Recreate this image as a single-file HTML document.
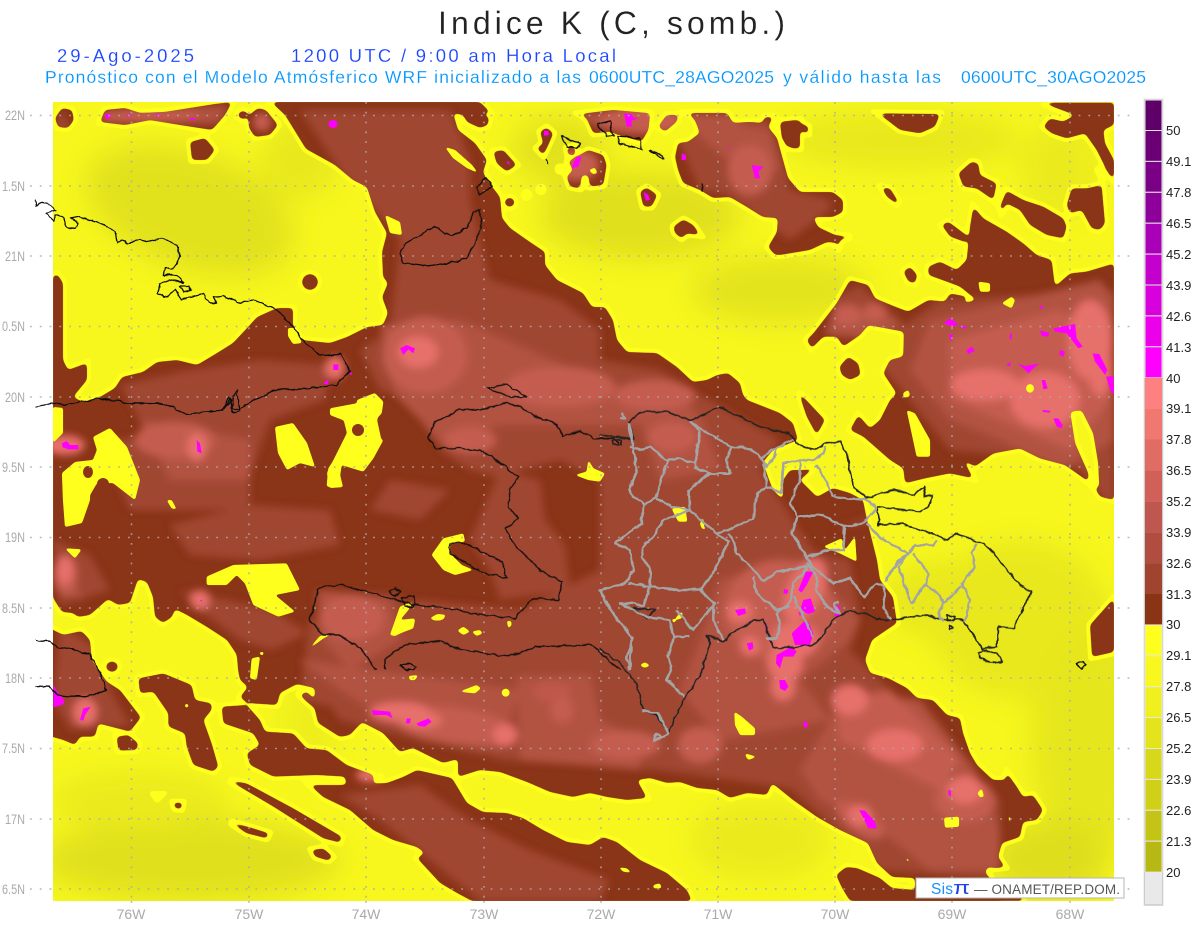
<!DOCTYPE html>
<html><head><meta charset="utf-8"><title>Indice K</title>
<style>
html,body{margin:0;padding:0;background:#fff;width:1200px;height:927px;overflow:hidden}
svg{display:block}
text{font-family:"Liberation Sans",sans-serif;white-space:pre}
.k path{vector-effect:non-scaling-stroke}
.lat{fill:#aaa;font-size:14px}
.lon{fill:#aaa;font-size:14px;text-anchor:middle}
.cb{fill:#222;font-size:13px}
.t{stroke:#fff;stroke-width:.15px}
</style></head><body>
<svg width="1200" height="927" viewBox="0 0 1200 927" xmlns="http://www.w3.org/2000/svg">
<defs>
<filter id="f3" filterUnits="userSpaceOnUse" x="0" y="0" width="1200" height="927"><feGaussianBlur stdDeviation="4"/></filter>
<filter id="f12" filterUnits="userSpaceOnUse" x="0" y="0" width="1200" height="927"><feGaussianBlur stdDeviation="14"/></filter>
<filter id="r2" filterUnits="userSpaceOnUse" x="0" y="0" width="1200" height="927" color-interpolation-filters="sRGB"><feGaussianBlur stdDeviation="2"/><feComponentTransfer><feFuncA type="linear" slope="8" intercept="-3.5"/></feComponentTransfer></filter>
<filter id="r1" filterUnits="userSpaceOnUse" x="0" y="0" width="1200" height="927" color-interpolation-filters="sRGB"><feGaussianBlur stdDeviation="1.1"/><feComponentTransfer><feFuncA type="linear" slope="6" intercept="-2.3"/></feComponentTransfer></filter>
<filter id="w" filterUnits="userSpaceOnUse" x="0" y="0" width="1200" height="927"><feTurbulence type="fractalNoise" baseFrequency=".13" numOctaves="2" seed="4" result="n"/><feDisplacementMap in="SourceGraphic" in2="n" scale="4" xChannelSelector="R" yChannelSelector="G"/></filter>
<clipPath id="map"><rect x="53" y="102" width="1061" height="799"/></clipPath>
<g id="b" class="k">
<path d="M271,102 480,102 490,112 482,115 489,117 488,125 480,128 467,122 463,115 453,113 458,130 475,143 487,160 483,172 487,180 500,197 502,218 510,228 530,242 545,252 545,265 557,280 583,293 592,307 605,307 613,320 617,340 627,352 657,353 677,367 693,382 707,380 717,375 728,373 740,383 743,395 747,400 780,413 793,423 798,440 773,450 763,462 768,477 773,490 783,500 783,480 790,470 805,470 815,467 800,480 817,497 833,488 850,493 863,500 867,520 877,560 880,580 893,597 897,623 872,640 865,660 870,673 888,678 907,688 917,698 933,700 947,715 960,718 963,733 970,753 977,765 993,780 1005,780 1007,773 1017,787 1023,797 1033,795 1043,810 1037,820 1023,822 1020,837 1002,843 998,857 1005,867 997,868 987,867 985,873 990,878 915,878 892,877 877,863 868,843 840,830 817,817 793,800 772,783 767,795 747,793 730,798 717,790 697,788 680,782 667,783 650,778 637,780 647,798 627,800 607,797 590,793 573,797 550,792 527,782 500,772 480,770 458,777 458,759 443,763 413,748 400,752 383,733 362,722 350,735 340,737 318,723 315,710 315,688 297,684 280,693 277,705 247,703 240,697 248,687 240,680 238,670 237,655 227,640 207,627 187,615 175,609 172,617 163,623 155,617 153,597 147,582 138,579 130,603 118,605 108,599 90,615 78,617 73,613 62,612 53,598 53,275 58,275 63,283 63,360 68,370 87,363 87,380 73,397 83,402 100,397 115,388 122,377 143,372 157,362 177,360 197,365 217,353 233,343 248,327 257,317 277,308 293,308 293,327 302,340 320,342 330,343 347,337 367,327 383,325 388,313 382,297 388,283 383,277 382,252 387,233 375,212 367,187 353,180 335,165 306,149 285,115z"/>
<path d="M310,785 340,785 387,783 403,777 417,770 452,778 467,803 483,812 507,813 523,818 543,830 567,842 590,845 603,837 617,842 640,860 667,873 687,890 692,901 472,901 457,893 440,883 417,858 425,853 417,847 393,840 373,830 350,810 323,797z"/>
<path d="M688,113 727,113 733,123 750,122 762,123 765,117 773,117 768,127 777,138 788,178 800,192 833,192 843,200 843,212 833,217 813,217 818,227 835,235 852,237 840,240 838,252 837,243 827,242 810,250 780,255 775,255 768,247 777,232 778,218 763,217 747,207 730,197 713,198 700,190 683,183 678,170 675,157 678,143 688,142 700,133 695,120z"/>
<path d="M1090,625 1114,598 1114,652 1092,657z"/>
<path d="M100,122 105,110 125,108 140,113 165,112 190,108 215,104 232,102 225,115 212,130 180,125 150,120 125,125z M55,118 62,108 72,110 74,120 68,128 58,127z M248,116 258,108 266,110 278,125 270,135 255,137 249,128z M238,115a5,4 0 1,0 10,0a5,4 0 1,0-10,0z M190,142 205,138 215,150 207,160 192,160z"/>
<path d="M302,282a8,8 0 1,0 16,0a8,8 0 1,0-16,0z"/>
<g transform="translate(400,100) scale(.33333)">
<path d="M540,42 640,30 750,40 745,90 725,125 655,105 630,95 580,100 560,55z M775,80 800,45 835,45 830,65 795,95z M1140,65 1200,60 1200,145 1175,145 1145,115 1160,80z M280,155 310,150 350,195 320,215 290,190z M420,95 440,82 460,100 445,135 430,165 410,145 430,130z M505,185 565,150 610,165 620,195 610,255 570,260 565,225 545,225 540,265 510,260 500,230 520,210z M500,145 525,140 525,165 505,165z M820,380 850,358 880,375 900,405 860,400 845,415 825,400z M720,275 740,262 772,285 755,320 730,320z M417,268a6,6 0 1,0 12,0a6,6 0 1,0-12,0z M374,285a6,7 0 1,0 12,0a6,7 0 1,0-12,0z M314,307a15,14 0 1,0 30,0a15,14 0 1,0-30,0z M474,207a4,6 0 1,0 8,0a4,6 0 1,0-8,0z"/>
</g>
<g transform="translate(780,100) scale(.33333)">
<path d="M0,70 40,60 85,80 85,100 50,90 45,140 20,140 5,110z M295,40 480,42 465,80 420,100 360,90z M535,220 575,185 595,190 600,225 650,250 640,300 590,265 550,260z M305,262 330,265 355,305 350,312 320,290z M485,375 505,365 565,410 560,428 510,410z M785,8 885,45 850,65 810,55 790,80 815,100 860,115 915,100 950,150 985,220 1002,240 1002,180 975,130 970,90 1002,75 1002,8z M955,210 970,205 965,230z M660,320 680,272 730,300 790,320 850,355 860,380 850,415 800,405 750,375 720,330 680,310 665,335z M860,315 875,265 920,265 965,255 975,370 960,390 935,385 905,330 870,340z M370,515 390,500 412,525 405,550 385,545z M178,800 205,770 235,790 242,825 210,840 185,825z M55,875 135,960 110,1005 80,950z"/>
<path d="M570,380 580,320 610,355 680,395 730,430 770,465 815,480 825,560 870,520 920,515 970,500 1002,490 1002,1200 960,1190 945,1165 958,1160 955,1090 940,1000 905,930 870,935 885,1030 925,1120 925,1145 855,1095 780,1075 720,1045 640,1060 585,1100 550,1080 580,1135 510,1120 435,1135 375,1150 370,1105 330,1080 250,1010 210,990 235,945 270,985 300,960 330,900 350,880 310,820 330,780 370,770 372,695 265,675 240,705 190,740 170,710 130,710 95,745 80,720 100,700 170,610 210,540 265,555 285,595 345,620 385,635 445,600 495,605 510,580 560,590 550,610 590,600 540,560 500,545 445,525 445,500 480,485 530,510 560,480z"/>
</g>
<g transform="translate(40,500) scale(.33333)">
<path d="M0,370 70,405 125,393 150,420 155,480 200,545 240,570 303,652 270,695 175,670 165,710 120,710 105,735 70,720 0,700z M230,710 265,705 295,730 290,750 235,752z M295,535 370,520 455,555 465,600 515,610 515,630 490,660 515,730 535,800 520,815 460,795 440,740 435,700 385,680 385,640 340,575 300,580z M198,500a18,16 0 1,0 36,0a18,16 0 1,0-36,0z M345,885 362,885 352,895z M400,908 428,908 424,927 405,925z M568,965 640,985 687,1000 680,1015 620,1000z M565,840 620,850 760,925 905,1010 900,1028 850,1015 700,920z M815,1050 850,1045 878,1070 865,1082 825,1070z M545,620 620,615 660,660 675,695 760,700 800,745 860,750 920,795 1000,825 1000,860 920,855 915,830 830,825 700,830 630,795 620,760 660,735 640,700 550,670z M780,585 800,575 825,600 830,630 800,605z M590,465 625,460 625,500 620,540 600,540z"/>
</g>
<path d="M836,875 846,867 857,868 880,878 892,888 915,890 915,901 850,901 842,888z M915,878 990,878 1000,897 1023,897 1023,901 915,901z"/>
</g>
<mask id="bm" maskUnits="userSpaceOnUse" x="0" y="0" width="1200" height="927"><use href="#b" fill="#fff" filter="url(#r2)"/></mask>
</defs>

<rect width="1200" height="927" fill="#fff"/>
<g clip-path="url(#map)">
<rect x="53" y="102" width="1061" height="799" fill="#f7f71e"/>
<g filter="url(#f12)">
<ellipse cx="190" cy="210" rx="110" ry="60" fill="#e2e21c" transform="rotate(20 190 210)"/>
<ellipse cx="300" cy="160" rx="40" ry="40" fill="#e8e81c"/>
<ellipse cx="640" cy="215" rx="100" ry="45" fill="#e0e01c"/>
<ellipse cx="560" cy="150" rx="50" ry="35" fill="#e2e21c"/>
<ellipse cx="780" cy="290" rx="90" ry="35" fill="#e4e41c"/>
<ellipse cx="900" cy="140" rx="120" ry="30" fill="#e8e81c"/>
<ellipse cx="1060" cy="170" rx="40" ry="50" fill="#eaea1c"/>
<ellipse cx="190" cy="860" rx="150" ry="42" fill="#e0e01c"/>
<ellipse cx="140" cy="800" rx="90" ry="30" fill="#eaea1c"/>
<ellipse cx="310" cy="720" rx="30" ry="60" fill="#eeee1c"/>
<ellipse cx="760" cy="840" rx="70" ry="40" fill="#eaea1c"/>
<ellipse cx="1020" cy="620" rx="90" ry="80" fill="#e8e81c"/>
<ellipse cx="1090" cy="740" rx="60" ry="120" fill="#e6e61c"/>
<ellipse cx="1050" cy="860" rx="60" ry="40" fill="#dede1c"/>
<ellipse cx="950" cy="600" rx="70" ry="40" fill="#e8e81c"/>
</g>
<use href="#b" fill="#ffff1e" stroke="#ffff1e" stroke-width="8" filter="url(#r2)"/>
<use href="#b" fill="#8a3418" filter="url(#r2)"/>
<g mask="url(#bm)">
<g filter="url(#f3)">
<g fill="#a04630">
<path d="M300,110 450,110 470,160 470,200 490,280 560,300 600,330 600,360 660,370 700,395 780,440 760,470 760,540 850,560 860,620 850,650 900,700 950,750 980,800 1000,880 880,870 800,790 660,770 500,760 400,720 300,700 310,620 420,600 520,610 600,570 600,480 500,430 480,420 380,390 360,350 390,330 400,240 340,170z"/>
<path d="M120,385 180,372 260,360 330,365 325,400 270,420 245,490 200,510 150,470 140,420z"/>
<path d="M53,540 90,555 110,590 60,605z M180,590 273,610 307,633 273,650 240,640 200,610z M315,590 400,595 410,650 360,690 320,660z M300,660 420,650 620,670 640,760 480,755 340,720z M340,795 420,785 470,820 530,850 610,880 600,901 480,901 430,860 380,820z M60,625 100,650 110,690 130,725 70,730 53,700z"/>
<path d="M440,410 540,420 600,440 580,455 560,460 520,470 510,480 470,470 440,450z M500,470 540,480 545,520 565,545 570,590 500,600 490,570 470,540z M390,480 450,490 420,520 370,510z"/>
<path d="M940,300 1114,290 1114,510 1080,470 1000,455 950,450 910,400 850,330 830,300 860,285 905,325z M700,125 770,130 790,190 830,200 830,210 790,240 720,190 690,170z M830,530 880,520 930,520 920,500z"/>
<path d="M620,480 760,470 820,560 850,660 1000,800 1000,870 880,870 770,770 640,720 620,660z"/>
<path d="M100,110 230,104 225,125 180,125 100,125z M560,110 650,110 750,113 745,140 680,135 600,130z M60,108 72,130 55,130z M170,525 250,505 330,510 340,545 260,560 190,555z"/>
<path d="M100,440 250,430 250,510 130,510z"/>
<path d="M670,120 690,110 770,120 790,180 760,200 700,190z M480,120 460,140 470,180 440,150z"/>
</g>
<g fill="#b25242">
<path d="M380,325 460,320 530,350 610,385 690,405 700,420 620,425 500,425 440,445 420,420 395,395z"/>
<path d="M720,580 800,560 860,620 850,640 800,680 830,720 720,740 680,690 700,640z"/>
<path d="M517,677 590,675 600,720 640,740 640,770 520,760z"/>
<path d="M840,690 920,700 975,770 1000,830 1000,870 930,870 880,830 820,800 800,770 830,720z"/>
<path d="M930,320 1100,280 1114,300 1114,440 1060,470 1000,440 950,420 910,370z"/>
<path d="M300,660 520,690 500,750 420,740 340,690z M640,420 700,415 720,470 660,480z"/>
<path d="M320,590 390,600 400,640 350,670 322,640z M140,420 250,440 250,480 170,480z"/>
<path d="M105,112 225,108 215,122 105,122z M570,115 740,115 740,135 600,125z M835,305 900,320 880,340 825,335z M55,590 85,600 65,570z"/>
<path d="M680,120 700,118 770,130 780,170 740,170z"/>
</g>
<g fill="#c45d50">
<ellipse cx="425" cy="355" rx="42" ry="38"/><ellipse cx="560" cy="387" rx="55" ry="20"/><ellipse cx="655" cy="395" rx="40" ry="15"/>
<ellipse cx="470" cy="440" rx="26" ry="13"/><ellipse cx="672" cy="437" rx="24" ry="15"/>
<ellipse cx="352" cy="618" rx="32" ry="22"/><ellipse cx="455" cy="725" rx="60" ry="17" transform="rotate(8 455 725)"/>
<ellipse cx="552" cy="692" rx="18" ry="10" opacity=".7"/><ellipse cx="562" cy="710" rx="11" ry="13"/><ellipse cx="625" cy="745" rx="35" ry="14"/>
<ellipse cx="780" cy="610" rx="55" ry="50"/><ellipse cx="700" cy="745" rx="22" ry="18"/>
<path d="M835,700 890,690 930,730 960,760 940,790 880,760 840,740z"/>
<path d="M950,340 1060,310 1110,350 1110,400 1070,450 1000,420 950,400z"/>
<ellipse cx="175" cy="440" rx="40" ry="18"/><ellipse cx="262" cy="122" rx="9" ry="9"/>
<ellipse cx="640" cy="120" rx="40" ry="14"/><ellipse cx="750" cy="170" rx="22" ry="25"/><ellipse cx="577" cy="165" rx="22" ry="16"/>
<ellipse cx="965" cy="800" rx="30" ry="22"/><ellipse cx="860" cy="820" rx="28" ry="12" transform="rotate(35 860 820)"/>
<ellipse cx="150" cy="115" rx="50" ry="6"/><ellipse cx="65" cy="575" rx="12" ry="20"/>
<ellipse cx="848" cy="315" rx="14" ry="11"/><ellipse cx="875" cy="312" rx="12" ry="9"/>
</g>
<g fill="#e6706a">
<ellipse cx="418" cy="352" rx="20" ry="16"/><ellipse cx="895" cy="745" rx="28" ry="16"/><ellipse cx="850" cy="700" rx="18" ry="15"/>
<ellipse cx="1045" cy="400" rx="35" ry="28"/><ellipse cx="1090" cy="340" rx="22" ry="40"/><ellipse cx="985" cy="385" rx="34" ry="16"/>
<ellipse cx="965" cy="790" rx="18" ry="14"/><ellipse cx="805" cy="590" rx="18" ry="34" transform="rotate(25 805 590)"/>
<ellipse cx="795" cy="640" rx="24" ry="18"/><ellipse cx="740" cy="612" rx="13" ry="11"/><ellipse cx="785" cy="662" rx="18" ry="20"/>
<ellipse cx="750" cy="646" rx="10" ry="10"/><ellipse cx="783" cy="687" rx="12" ry="14"/><ellipse cx="400" cy="712" rx="30" ry="10"/>
<ellipse cx="505" cy="735" rx="12" ry="11"/><ellipse cx="200" cy="600" rx="10" ry="10"/><ellipse cx="65" cy="445" rx="20" ry="10"/>
<ellipse cx="197" cy="447" rx="10" ry="14"/><ellipse cx="85" cy="712" rx="12" ry="14"/><ellipse cx="335" cy="368" rx="10" ry="12"/>
<ellipse cx="860" cy="815" rx="12" ry="10"/><ellipse cx="65" cy="570" rx="8" ry="14"/><ellipse cx="1100" cy="370" rx="12" ry="26"/>
<ellipse cx="420" cy="720" rx="22" ry="9"/><ellipse cx="370" cy="775" rx="14" ry="7"/>
</g>
</g>
</g>
<g fill="#ffff1e" filter="url(#r1)">
<path d="M93,437 110,428 127,447 140,480 135,500 113,483 97,483 90,495 90,500 82,523 65,527 63,500 62,473 75,462 93,460 97,450z"/>
<path d="M53,407 63,408 63,433 53,443z M385,215 400,222 402,235 390,233z M288,328 295,328 302,343 293,344 288,336z"/>
<path d="M332,410 357,407 357,400 375,393 383,403 377,420 382,443 363,433 358,440 337,463 343,487 330,488 327,473 337,453 347,433 343,417z"/>
<path d="M275,427 293,423 307,443 315,467 300,463 287,470 278,453z"/>
<path d="M445,147 455,150 472,165 478,173 467,168 453,158z"/>
<g transform="translate(40,500) scale(.33333)">
<path d="M500,230 580,195 740,190 780,270 705,285 765,335 715,350 640,315 615,250 590,225 560,255 500,255z M75,145 125,148 105,175z M1175,165 1200,130 1200,195z M805,448 840,408 880,400 850,415z M635,475 660,470 650,540 630,535z M655,458 672,455 668,468z M435,612 445,612 445,622 435,622z M1010,830a12,13 0 1,0 24,0a12,13 0 1,0-24,0z"/>
<path d="M380,0 395,0 410,28 395,25z"/>
</g>
<g transform="translate(280,380) scale(.33333)">
<path d="M150,85 230,70 285,40 310,65 305,100 285,120 285,150 265,165 310,180 280,235 250,275 185,255 175,320 140,320 145,265 175,220 215,130 150,105z M455,525 490,475 550,460 555,485 510,490 510,520 545,555 580,570 525,585 490,570z M885,285 920,275 925,240 940,265 975,280 960,305 925,300z M330,765 360,680 400,665 385,690 360,720 405,715 390,745 345,768z M450,715 470,703 497,705 490,718 465,722z M532,752 550,740 570,755 550,765z M575,755 600,750 608,760 590,768z M683,728 692,720 695,735 685,745z"/>
</g>
<g transform="translate(400,600) scale(.33333)">
<path d="M90,55 115,42 138,45 120,62z M320,60 335,70 325,85z M0,70 45,58 40,85 0,100z M25,228 55,225 45,240 30,240z M178,275 230,255 243,265 225,280z M305,278a12,12 0 1,0 24,0a12,12 0 1,0-24,0z M1003,335 1025,350 1065,385 1065,405 1020,405 1005,375z M1035,460 1068,470 1045,478z M720,195 735,187 750,197 735,203z M655,802 680,805 695,818 670,815z M760,855 780,850 785,865 760,865z M835,40 850,38 840,55z M815,55 830,60 820,70z"/>
</g>
<g transform="translate(600,390) scale(.33333)">
<path d="M215,355 255,350 262,395 235,395 222,370z M300,400 310,380 312,410 320,420 305,415z M345,380 352,378 350,392z M670,470 725,445 735,480 765,440 770,515 720,490z M230,680 247,665 245,685 225,690z M120,825 135,818 148,825 130,832z M910,15 925,0 930,15 912,22z M435,1095 470,1100 445,1110z"/>
</g>
<g transform="translate(780,100) scale(.33333)">
<path d="M380,930 405,940 450,1020 450,1070 410,1070 395,1000z M370,878 385,870 388,890 370,893z M595,545 630,550 630,575 600,575z M665,610 695,590 705,600 695,625z M738,865a12,13 0 1,0 24,0a12,13 0 1,0-24,0z"/>
</g>
<g transform="translate(760,640) scale(.33333)">
<path d="M552,533 597,530 597,560 555,563z M652,460 665,445 672,470 660,472z M745,530 752,530 750,560z M435,650 450,662 442,665z"/>
</g>
<g transform="translate(400,100) scale(.33333)"><path d="M567,210 585,203 592,220 578,222z"/></g>
</g>
<g fill="#8a3418">
<path d="M83,472a5,6 0 1,0 10,0a5,6 0 1,0-10,0z M352,430a6,6 0 1,0 12,0a6,6 0 1,0-12,0z M97,484a6,6 0 1,0 12,0a6,6 0 1,0-12,0z"/>
</g>
<g fill="#ff00ff">
<path d="M105,114 111,114 110,118 106,119z M127,114 132,115 128,117z M156,113 160,115 157,117z M190,118 195,118 195,120 190,120z"/>
<ellipse cx="333" cy="124" rx="4.5" ry="4"/>
<g transform="translate(400,100) scale(.33333)">
<path d="M672,40 695,42 700,52 715,55 695,62 695,80 680,80z M0,745 20,735 45,745 40,760 25,748 10,765z M530,170 545,170 535,200 515,205 520,190z M1055,195 1090,200 1075,215 1080,235 1065,235z M845,160 858,165 858,180 845,180z M730,275 745,285 750,300 738,302z M318,185 328,185 328,195z M985,143 990,143 990,148 985,148z M432,92 445,92 447,105 432,107z"/>
</g>
<g transform="translate(780,100) scale(.33333)">
<path d="M490,670 510,655 535,672 520,680z M538,680 555,675 558,688z M505,705 518,702 515,725z M558,752 575,740 585,752 565,762z M690,700 695,700 695,720 688,715z M680,795 692,785 690,800z M712,790 735,798 778,790 760,805 745,820 730,805z M785,840 795,840 803,865 790,868z M788,930 810,932 810,938 788,936z M820,955 835,955 848,975 845,985 830,980z M938,760 958,762 982,810 975,825 945,785z M978,830 1000,828 1002,885 990,870z M820,685 885,672 890,715 908,740 895,745 860,700 825,695z M780,692 808,698 805,710 785,708z M840,750 855,755 850,770 838,765z M780,615 790,620 782,630z"/>
</g>
<g transform="translate(0,180) scale(.33333)">
<path d="M185,790 200,783 210,795 235,795 235,808 205,808 188,802z M590,780 600,790 605,820 592,815z M1000,553 1015,553 1015,570 1000,570z M970,610 985,597 985,615z M1045,580 1055,575 1055,585z"/>
</g>
<g transform="translate(40,500) scale(.33333)">
<path d="M40,555 52,575 72,600 72,612 40,622z M130,625 152,620 135,645 130,662 120,660z M995,630 1050,635 1058,655 1040,645 1000,645z M1100,655 1112,655 1110,670 1098,670z M1130,670 1165,655 1175,665 1155,680 1135,678z M480,300 486,300 485,306z"/>
</g>
<g transform="translate(600,390) scale(.33333)">
<path d="M405,660 435,655 438,670 415,678z M552,597 565,600 562,612 550,610z M618,545 640,545 620,585 605,608 595,600z M610,630 632,625 645,665 625,672 600,660z M612,695 625,695 640,730 630,765 585,765 575,730z M530,795 575,770 590,785 580,800 550,800 540,835 528,820z M440,760 458,757 460,775 447,782z M538,870 555,870 565,890 555,903 540,895z M610,995 622,997 622,1012 612,1012z M700,645 720,650 720,680 705,680z M495,710 505,710 502,720z M595,665 603,670 600,680z"/>
</g>
<g transform="translate(760,640) scale(.33333)">
<path d="M298,510 315,512 345,545 350,565 325,565z M130,245 140,245 142,262 132,262z M565,450 573,452 573,468 565,465z"/>
</g>
</g>
<g stroke="#aaa" stroke-width="1.6" stroke-dasharray="1.8 8" fill="none" opacity=".85">
<path d="M131.5,102V901M249,102V901M366,102V901M484,102V901M601,102V901M718,102V901M835,102V901M952,102V901M1070,102V901"/>
</g>
</g>
<g stroke="#aaa" stroke-width="1.6" stroke-dasharray="1.8 8" fill="none" opacity=".85">
<path d="M30,115.5H1136M30,186H1136M30,256H1136M30,326.5H1136M30,397H1136M30,467H1136M30,537.5H1136M30,608H1136M30,678H1136M30,748.5H1136M30,819H1136M30,889H1136"/>
<path d="M131.5,901V908M249,901V908M366,901V908M484,901V908M601,901V908M718,901V908M835,901V908M952,901V908M1070,901V908"/>
</g>
<g fill="none" stroke="#111" stroke-width="1.3" stroke-linejoin="round" class="k" filter="url(#w)">
<g transform="translate(0,180) scale(.33333)">
<path d="M105,60 108,78 125,70 150,75 168,92 140,100 160,122 165,105 190,112 200,143 225,145 235,130 210,115 240,110 290,125 345,155 352,190 365,182 385,190 420,180 440,185 485,175 530,195 540,230 520,268 495,262 490,285 530,285 550,310 510,300 480,310 473,340 490,352 505,348 525,325 545,358 575,352 610,340 625,368 650,370 640,350 670,348 720,368 760,360 830,390 880,440 905,480 960,525 1020,522 1050,570 1010,615 950,622 820,632 760,660 720,690 695,685 690,655 670,690 560,702 490,670 380,668 300,655 200,675 150,672 105,680"/>
<path d="M695,697 700,650 710,630 715,660 720,695z M540,318 565,318 572,332 550,335z M685,650 695,660 672,685 668,690z"/>
</g>
<g transform="translate(400,100) scale(.33333)">
<path d="M0,460 15,430 50,410 105,380 150,408 200,385 220,340 240,328 245,385 200,475 150,488 80,498 10,490z M230,260 255,235 278,258 238,285z M485,108 540,130 530,145 500,140z M595,70 630,65 635,100 640,108 620,108 615,95 595,85z M655,108 720,115 725,150 660,130z M748,152 785,165 790,178z M440,175 445,195 M905,252 908,275"/>
</g>
<g transform="translate(280,380) scale(.33333)">
<path d="M445,175 465,125 490,115 540,90 600,88 680,70 730,85 790,120 830,130 850,170 900,150 940,175 1000,175 1020,190 M445,175 465,205 530,205 600,210 650,240 715,290 690,330 685,380 715,415 675,445 700,490 780,570 845,605 835,660 760,655 705,715 570,700 470,680 400,675 350,660 240,630 180,615 115,625 90,720 130,765 180,765 240,805 290,870"/>
<path d="M510,490 550,487 665,545 680,595 600,575 550,545 510,520z M325,635 345,622 362,635 345,650z M365,655 405,645 400,680 375,680z M620,25 680,12 740,50 700,52z"/>
<path d="M315,870 315,835 375,795 480,785 530,805 680,830 770,800 935,795 1020,870"/>
</g>
<g transform="translate(40,500) scale(.33333)">
<path d="M-15,422 30,425 50,440 100,450 150,465 175,510 200,570 140,590 90,590 50,585 30,560 -15,558"/>
</g>
<g transform="translate(400,600) scale(.33333)">
<path d="M0,195 30,190 48,200 40,210 15,208z"/>
</g>
<g transform="translate(760,640) scale(.33333)">
<path d="M950,70 970,65 980,75 965,88z"/>
</g>
<g transform="translate(600,390) scale(.33333)" stroke="#222" stroke-width="1.6">
<path d="M100,148 85,100 120,65 200,65 270,90 320,70 360,50 420,80 470,105 520,120 570,130 590,160 640,180 680,160 720,155 740,190 760,290 800,325 880,300 940,315 975,290 970,320 1000,315 985,350 960,365 835,350 835,405 900,400 1010,435 1040,450 1070,430 1160,465 1250,575 1295,605 1250,690 1245,715 1195,710 1190,770 1145,775 1090,690 1040,690 980,675 870,690 830,690 800,670 740,665 700,690 650,760 600,770 520,775 490,690 460,690 410,720 370,755 320,735 330,760 300,860 250,930 205,1030 170,975 130,960 110,880 60,820 0,775"/>
<path d="M1135,790 1150,780 1190,790 1207,815 1170,818 1140,805z M0,135 100,148 M35,150 65,150 65,165 38,162z M1040,675 1065,680 1060,692 1040,685z M1050,705 1060,715 1050,720z M100,655 165,660 140,685z"/>
</g>
</g>
<g fill="none" stroke="#a4a4a4" stroke-width="2.4" stroke-linejoin="round" class="k" filter="url(#w)">
<g transform="translate(600,390) scale(.33333)">
<path d="M85,100 100,170 110,250 85,300 130,345 125,400 45,460 90,480 100,540 75,580 0,600 30,660 100,745 80,800 90,840"/>
<path d="M90,170 130,180 150,170 200,210 235,205 285,220 300,125 270,95 390,170 450,175 485,205 510,185 580,150"/>
<path d="M300,125 285,235 330,250 390,250 380,210 395,170 M205,210 185,260 170,320 130,345 M170,325 215,350 270,360 265,300 330,250 M265,310 270,360 300,390 350,430 385,420 460,385 470,310 500,290 490,220 M485,205 500,230 520,200 530,180"/>
<path d="M500,290 545,310 550,220 600,210 640,210 670,190 675,170 M600,210 600,270 570,340 590,380 670,375 730,410 790,400 830,355 800,330 700,320 675,270 650,225"/>
<path d="M590,380 575,430 620,500 690,480 730,480 735,410 M620,500 630,520 610,550 580,580 570,640 530,670 540,700 530,745 500,745 M620,520 650,560 650,600 680,650 720,670 700,640 715,635"/>
<path d="M625,520 700,580 750,565 790,620 830,580 855,590 850,650 875,690 M855,575 890,520 920,495 895,530 920,600 935,640 975,585 1020,615 1030,640 1015,670 1030,695 M920,500 945,465 1000,465 1010,450 M940,490 985,550 975,590 M1130,460 1115,490 1125,530 1085,580 1110,630 1095,695 M1085,590 1030,640 M800,400 840,445 925,490"/>
<path d="M620,530 530,545 490,575 460,540 410,490 400,450 385,430 M460,560 470,610 530,660 570,650 M350,430 385,455 340,550 300,600 240,600 150,590 85,580 M580,620 610,680 640,740"/>
<path d="M190,390 160,440 130,470 125,500 150,540 150,590 130,650 100,640 60,640 140,680 210,690 220,740 270,740 M190,390 220,380 270,360 M300,600 345,640 280,720 230,660 M340,650 340,690 370,750 M220,740 205,800 215,830 200,870 250,920 M95,740 90,840 M125,960 175,970 205,1030 160,1055 170,1030 185,1040 M65,70 75,85 60,85"/>
</g>
</g>
<text class="t" x="438" y="34" font-size="32" fill="#222" textLength="347" lengthAdjust="spacing">Indice K (C, somb.)</text>
<text class="t" x="57" y="62" font-size="18.5" fill="#1a44ff" textLength="137" lengthAdjust="spacing">29-Ago-2025</text>
<text class="t" x="291" y="62" font-size="18.5" fill="#1a44ff" textLength="325" lengthAdjust="spacing">1200 UTC / 9:00 am Hora Local</text>
<text class="t" x="45" y="83" font-size="17.5" fill="#0096ff" textLength="536" lengthAdjust="spacing">Pronóstico con el Modelo Atmósferico WRF inicializado a las</text>
<text class="t" x="589" y="83" font-size="17.5" fill="#0096ff" textLength="185" lengthAdjust="spacing">0600UTC_28AGO2025</text>
<text class="t" x="783" y="83" font-size="17.5" fill="#0096ff" textLength="158" lengthAdjust="spacing">y válido hasta las</text>
<text class="t" x="961" y="83" font-size="17.5" fill="#0096ff" textLength="185" lengthAdjust="spacing">0600UTC_30AGO2025</text>
<g class="lat">
<text x="5" y="120" textLength="20" lengthAdjust="spacingAndGlyphs">22N</text><text x="2" y="191" textLength="23" lengthAdjust="spacingAndGlyphs">1.5N</text><text x="5" y="261" textLength="20" lengthAdjust="spacingAndGlyphs">21N</text><text x="2" y="331" textLength="23" lengthAdjust="spacingAndGlyphs">0.5N</text><text x="5" y="402" textLength="20" lengthAdjust="spacingAndGlyphs">20N</text><text x="2" y="472" textLength="23" lengthAdjust="spacingAndGlyphs">9.5N</text><text x="5" y="542" textLength="20" lengthAdjust="spacingAndGlyphs">19N</text><text x="2" y="613" textLength="23" lengthAdjust="spacingAndGlyphs">8.5N</text><text x="5" y="683" textLength="20" lengthAdjust="spacingAndGlyphs">18N</text><text x="2" y="753" textLength="23" lengthAdjust="spacingAndGlyphs">7.5N</text><text x="5" y="824" textLength="20" lengthAdjust="spacingAndGlyphs">17N</text><text x="2" y="894" textLength="23" lengthAdjust="spacingAndGlyphs">6.5N</text>
</g>
<text class="lon" x="131" y="919">76W</text><text class="lon" x="249" y="919">75W</text><text class="lon" x="366" y="919">74W</text><text class="lon" x="484" y="919">73W</text><text class="lon" x="601" y="919">72W</text><text class="lon" x="718" y="919">71W</text><text class="lon" x="835" y="919">70W</text><text class="lon" x="952" y="919">69W</text><text class="lon" x="1070" y="919">68W</text>
<rect x="1144.5" y="99.5" width="18" height="805.5" fill="#ddd" stroke="#ccc" stroke-width="1.5"/>
<g stroke="#e6e6e6" stroke-width="1">
<rect x="1145" y="100" width="17" height="30.5" fill="#5e0068"/>
<rect x="1145" y="130.5" width="17" height="30.9" fill="#6a0074"/>
<rect x="1145" y="161.4" width="17" height="30.9" fill="#7a0086"/>
<rect x="1145" y="192.3" width="17" height="30.9" fill="#8e009a"/>
<rect x="1145" y="223.2" width="17" height="30.9" fill="#aa00b8"/>
<rect x="1145" y="254.1" width="17" height="30.9" fill="#c400cc"/>
<rect x="1145" y="285" width="17" height="30.9" fill="#d800dc"/>
<rect x="1145" y="315.9" width="17" height="30.9" fill="#ec00ec"/>
<rect x="1145" y="346.8" width="17" height="30.9" fill="#ff00ff"/>
<rect x="1145" y="377.7" width="17" height="30.9" fill="#ff8080" stroke="none"/>
<rect x="1145" y="408.6" width="17" height="30.9" fill="#f07870" stroke="none"/>
<rect x="1145" y="439.5" width="17" height="30.9" fill="#e06c64" stroke="none"/>
<rect x="1145" y="470.4" width="17" height="30.9" fill="#d06058" stroke="none"/>
<rect x="1145" y="501.3" width="17" height="30.9" fill="#c05650" stroke="none"/>
<rect x="1145" y="532.2" width="17" height="30.9" fill="#b04c40" stroke="none"/>
<rect x="1145" y="563.1" width="17" height="30.9" fill="#a04430" stroke="none"/>
<rect x="1145" y="594" width="17" height="30.9" fill="#8a3416" stroke="none"/>
<rect x="1145" y="624.9" width="17" height="30.9" fill="#ffff1e"/>
<rect x="1145" y="655.8" width="17" height="30.9" fill="#f8f81e"/>
<rect x="1145" y="686.7" width="17" height="30.9" fill="#f0f01e"/>
<rect x="1145" y="717.6" width="17" height="30.9" fill="#e4e41c"/>
<rect x="1145" y="748.5" width="17" height="30.9" fill="#d8d81a"/>
<rect x="1145" y="779.4" width="17" height="30.9" fill="#d0d018"/>
<rect x="1145" y="810.3" width="17" height="30.9" fill="#c4c416"/>
<rect x="1145" y="841.2" width="17" height="30.9" fill="#b8b814"/>
<rect x="1145" y="872.1" width="17" height="32" fill="#e9e9e9" stroke="none"/>
</g>
<g class="cb">
<text x="1166" y="135">50</text><text x="1166" y="166">49.1</text><text x="1166" y="197">47.8</text><text x="1166" y="228">46.5</text><text x="1166" y="259">45.2</text><text x="1166" y="290">43.9</text><text x="1166" y="321">42.6</text><text x="1166" y="352">41.3</text><text x="1166" y="383">40</text><text x="1166" y="413">39.1</text><text x="1166" y="444">37.8</text><text x="1166" y="475">36.5</text><text x="1166" y="506">35.2</text><text x="1166" y="537">33.9</text><text x="1166" y="568">32.6</text><text x="1166" y="599">31.3</text><text x="1166" y="629">30</text><text x="1166" y="660">29.1</text><text x="1166" y="691">27.8</text><text x="1166" y="722">26.5</text><text x="1166" y="753">25.2</text><text x="1166" y="784">23.9</text><text x="1166" y="815">22.6</text><text x="1166" y="846">21.3</text><text x="1166" y="877">20</text>
</g>
<rect x="916" y="878" width="208" height="20" fill="#fff" stroke="#b4b4b4" stroke-width="1"/>
<text x="931" y="894" font-size="15.5" fill="#1590ff" textLength="22" lengthAdjust="spacing">Sis</text>
<text x="953" y="894" font-size="18" fill="#2244ee" textLength="17" lengthAdjust="spacingAndGlyphs">π</text>
<text x="974" y="894" font-size="13.5" fill="#555" textLength="146" lengthAdjust="spacing">— ONAMET/REP.DOM.</text>
</svg>
</body></html>
